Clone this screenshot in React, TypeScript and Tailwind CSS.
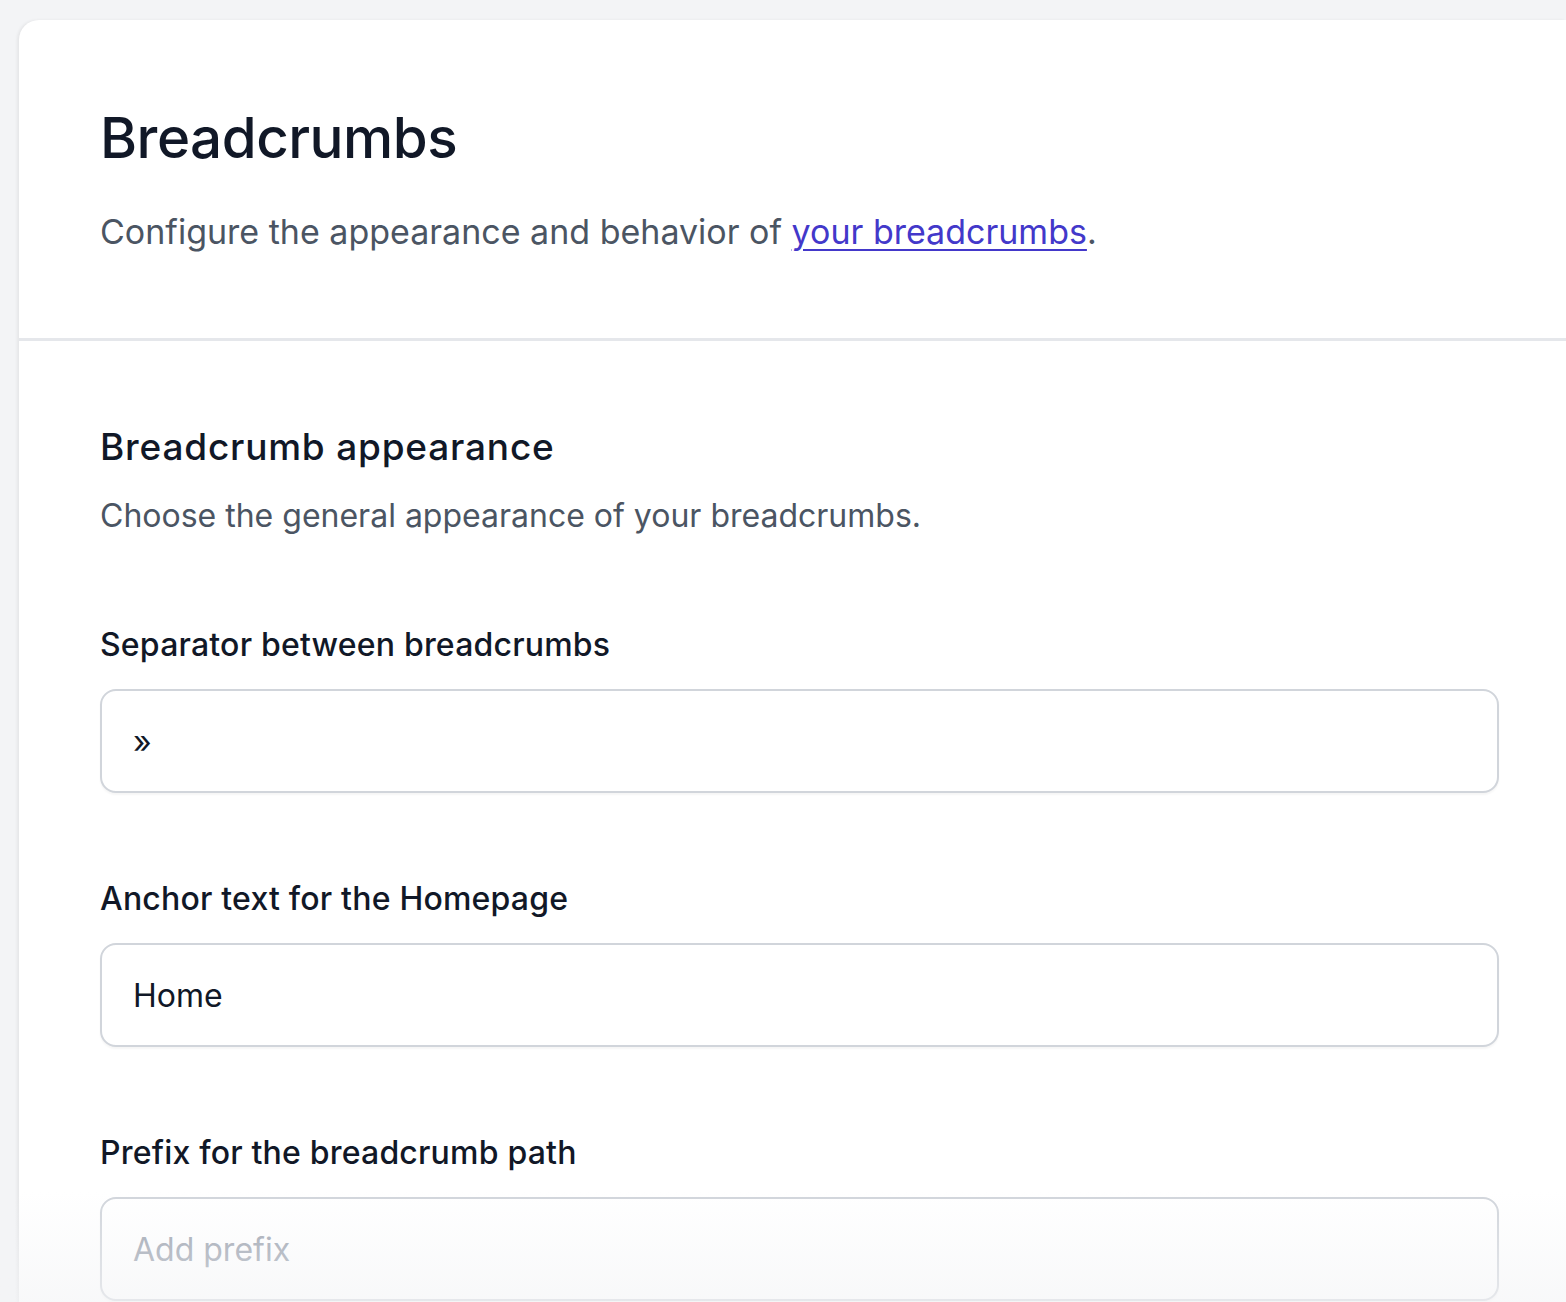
import { useState } from 'react'

const FONT = { fontFamily: 'Inter, "Noto Sans", sans-serif' }

function Field({
  label,
  value,
  placeholder,
  onChange,
}: {
  label: string
  value: string
  placeholder?: string
  onChange: (v: string) => void
}) {
  return (
    <label className="flex flex-col gap-[20px]">
      <span className="text-[32px] leading-[48px] font-medium tracking-[0.2px] text-[#111827]">{label}</span>
      <input
        type="text"
        value={value}
        placeholder={placeholder}
        onChange={(e) => onChange(e.target.value)}
        className="h-[104px] w-full rounded-[16px] border-2 border-[#d1d5db] bg-white px-[31px] text-[32px] text-[#111827] placeholder:text-[#9ca3af] shadow-[0_2px_2px_rgba(0,0,0,0.04)] focus:outline-none"
      />
    </label>
  )
}

export default function App() {
  const [separator, setSeparator] = useState('»')
  const [home, setHome] = useState('Home')
  const [prefix, setPrefix] = useState('')

  return (
    <div className="relative h-[1302px] overflow-hidden bg-[#f3f4f6] pt-[20px] pl-[19px]" style={FONT}>
      <div className="min-h-full rounded-tl-[20px] bg-white shadow-[-2px_0_3px_rgba(0,0,0,0.06)]">
        <header className="px-[81px] pt-[83px] pb-[82px]">
          <h1 className="text-[56.5px] leading-[70px] font-medium tracking-[-0.5px] text-[#111827]">Breadcrumbs</h1>
          <p className="mt-[35px] text-[34px] leading-[48px] text-[#4b5563]">
            Configure the appearance and behavior of{' '}
            <a href="#" className="text-[#4338ca] underline underline-offset-[5px] decoration-2">
              your breadcrumbs
            </a>
            .
          </p>
        </header>

        <div className="h-[3px] bg-[#e5e7eb]" />

        <section className="px-[81px] pt-[82px]">
          <div className="w-[1399px]">
            <h2 className="text-[37px] leading-[48px] font-medium tracking-[0.8px] text-[#111827]">Breadcrumb appearance</h2>
            <p className="mt-[21px] text-[32px] leading-[48px] text-[#4b5563]">
              Choose the general appearance of your breadcrumbs.
            </p>

            <div className="mt-[81px] flex flex-col gap-[82px]">
              <Field label="Separator between breadcrumbs" value={separator} onChange={setSeparator} />
              <Field label="Anchor text for the Homepage" value={home} onChange={setHome} />
              <Field label="Prefix for the breadcrumb path" value={prefix} placeholder="Add prefix" onChange={setPrefix} />
            </div>
          </div>
        </section>
      </div>

      <div className="pointer-events-none absolute inset-x-0 bottom-0 h-[110px] bg-gradient-to-b from-white/0 to-[#f3f4f6]/60" />
    </div>
  )
}
